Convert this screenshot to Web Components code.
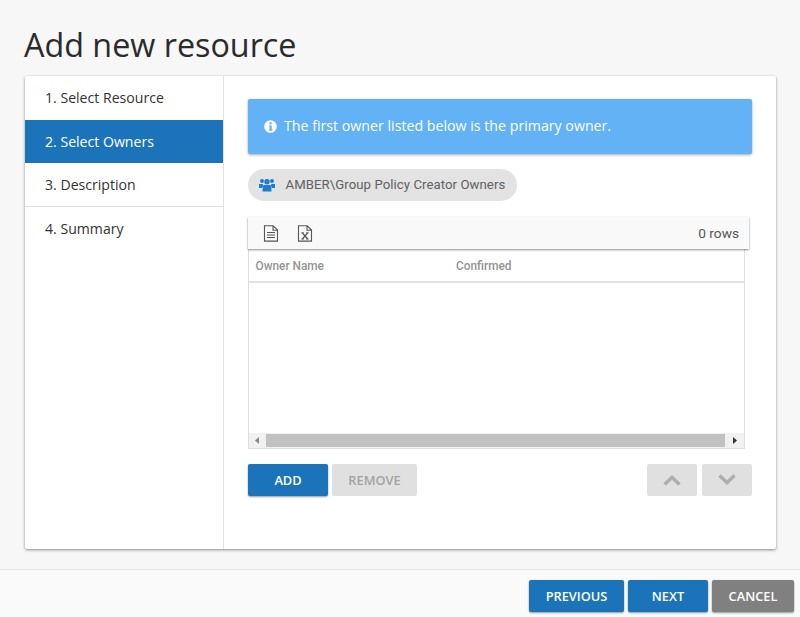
<!DOCTYPE html>
<html lang="en"><head><meta charset="utf-8"><title>Add new resource</title>
<style>
html,body{margin:0;padding:0;height:100%}
body{background:#f7f7f7;font-family:"Open Sans","Liberation Sans",sans-serif;overflow:hidden}
</style></head><body>
<wizard-dialog heading="Add new resource">
  <wizard-steps slot="nav">
    <wizard-step>1. Select Resource</wizard-step>
    <wizard-step active>2. Select Owners</wizard-step>
    <wizard-step>3. Description</wizard-step>
    <wizard-step last>4. Summary</wizard-step>
  </wizard-steps>
  <info-alert>The first owner listed below is the primary owner.</info-alert>
  <owner-chip>AMBER\Group Policy Creator Owners</owner-chip>
  <grid-toolbar rows="0 rows"></grid-toolbar>
  <owner-grid></owner-grid>
  <action-row>
    <ui-button kind="primary" w="80" slot="left">ADD</ui-button>
    <ui-button kind="disabled" w="85" slot="left">REMOVE</ui-button>
    <ui-button kind="disabled" w="50" slot="right" aria-label="Move up"><svg width="20" height="12" viewBox="0 0 20 12"><path d="M2.5 10.5 10 3.5l7.5 7" fill="none" stroke="#aeaeae" stroke-width="3.6"/></svg></ui-button>
    <ui-button kind="disabled" w="50" slot="right" aria-label="Move down"><svg width="20" height="12" viewBox="0 0 20 12"><path d="M2.5 1.5 10 8.5l7.5-7" fill="none" stroke="#aeaeae" stroke-width="3.6"/></svg></ui-button>
  </action-row>
  <ui-button slot="footer" kind="primary" w="95">PREVIOUS</ui-button>
  <ui-button slot="footer" kind="primary" w="80">NEXT</ui-button>
  <ui-button slot="footer" kind="neutral" w="82">CANCEL</ui-button>
</wizard-dialog>
<script>
function def(name, html, extra){
  customElements.define(name, class extends HTMLElement{
    constructor(){super();this.attachShadow({mode:'open'}).innerHTML=typeof html==='function'?html(this):html;}
    connectedCallback(){ if(extra) extra(this); }
  });
}
const FONT='"Open Sans","Liberation Sans",sans-serif';
def('wizard-dialog',`<style>
:host{display:flex;flex-direction:column;width:800px;height:617px;box-sizing:border-box}
h1{margin:0;padding:23px 0 0 24px;height:76px;flex:none;box-sizing:border-box;font:400 32.3px/42px ${FONT};color:#2b2b2b}
.card{margin:0 24px 0 25px;height:473px;background:#fff;display:flex;box-shadow:0 1px 3px rgba(0,0,0,.45);border-radius:2px;flex:none}
.nav{width:199px;flex:none;border-right:1px solid #e2e2e2;box-sizing:border-box}
.main{flex:1;padding:23px 24px 0;min-width:0}
.foot{margin-top:20px;flex:1;border-top:1px solid #e6e6e6;background:#fafafa;display:flex;justify-content:flex-end;align-items:flex-start;gap:4px;padding:10px 6px 0}
</style>
<h1 id="t"></h1>
<div class="card"><div class="nav"><slot name="nav"></slot></div><div class="main"><slot></slot></div></div>
<div class="foot"><slot name="footer"></slot></div>`,el=>{el.shadowRoot.getElementById('t').textContent=el.getAttribute('heading')});
def('wizard-steps',`<style>:host{display:block}</style><slot></slot>`);
def('wizard-step',`<style>
:host{display:block;height:44px;box-sizing:border-box;padding-left:20px;font:400 14.1px/43px ${FONT};color:#333;border-bottom:1px solid #e2e2e2;white-space:nowrap}
:host(:first-child){border-bottom:0}
:host([active]){background:#1b73ba;color:#fff;border-bottom:0;height:43px;line-height:43px}
:host([last]){border-bottom:0}
</style><slot></slot>`);
def('info-alert',`<style>
:host{display:flex;align-items:center;height:55px;background:#62b2f5;border-radius:2px;box-shadow:0 1px 3px rgba(0,0,0,.35);color:#fff;font:400 14.2px/20px ${FONT};padding:0 0 1px 16px;box-sizing:border-box;gap:7px;white-space:nowrap}
svg{flex:none}
</style><svg width="13" height="13" viewBox="0 0 13 13"><circle cx="6.5" cy="6.5" r="6.3" fill="#fff"/><rect x="5.5" y="2.3" width="2.2" height="2.1" fill="#62b2f5"/><path d="M4.8 5.4h2.9v4.1h.8v1.2H4.8V9.5h.8V6.6h-.8z" fill="#62b2f5"/></svg><span><slot></slot></span>`);
def('owner-chip',`<style>
:host{display:flex;align-items:center;width:269px;height:32px;margin-top:15px;background:#e3e3e3;border-radius:16px;box-sizing:border-box;padding-left:11px;gap:10.5px;font:400 13.2px/20px Roboto,sans-serif;color:#616161;letter-spacing:.06px;white-space:nowrap}
svg{flex:none}
</style><svg width="16" height="14" viewBox="0 0 16 13" fill="#1e7dcc"><circle cx="3" cy="2.4" r="2"/><circle cx="13" cy="2.4" r="2"/><circle cx="8" cy="3.2" r="2.7"/><path d="M0 5.6h3.8a3 3 0 0 0 .4 1.9A3.2 3.2 0 0 0 3 9.4H0zM16 5.6h-3.8a3 3 0 0 1-.4 1.9A3.2 3.2 0 0 1 13 9.4h3z"/><path d="M5.4 6.6h5.2A2 2 0 0 1 12.4 8.6V13H3.6V8.6a2 2 0 0 1 1.8-2z"/></svg><span><slot></slot></span>`);
def('grid-toolbar',el=>`<style>
:host{display:flex;align-items:center;justify-content:space-between;width:501px;height:32px;margin-top:16px;box-sizing:border-box;background:#f9f9f9;box-shadow:0 1px 2px rgba(0,0,0,.45);padding:0 10px 0 15px;color:#555;font:400 13.7px/20px Roboto,sans-serif;position:relative}
.i{display:flex;gap:18px}
</style><div class="i">
<svg width="16" height="17" viewBox="0 0 16 17" fill="none" stroke="#555" stroke-width="1.1"><path d="M1.5.8h8.7l4.3 4.3v11H1.5zM10 .8v4.5h4.5M4 7.5h8M4 10h8M4 12.5h8"/></svg>
<svg width="16" height="17" viewBox="0 0 16 17" fill="none" stroke="#555" stroke-width="1.1"><path d="M1.5.8h8.7l4.3 4.3v11H1.5zM10 .8v4.5h4.5"/><path d="M4.3 7.8h2.6M9.1 7.8h2.6M4.3 14h2.6M9.1 14h2.6" stroke-width=".9"/><path d="M5.4 7.8 10.6 14M10.6 7.8 5.4 14" stroke-width="1.3"/></svg>
</div><span>${el.getAttribute('rows')}</span>`);
def('owner-grid',`<style>
:host{display:flex;flex-direction:column;width:497px;height:200px;box-sizing:border-box;border:1px solid #dedede;border-top:0;background:#fff}
.h{display:flex;height:34px;flex:none;box-sizing:border-box;border-bottom:2px solid #e3e3e3;font:500 11.85px/34px Roboto,sans-serif;color:#949494}
.h div:first-child{width:207px;padding-left:6.5px;box-sizing:border-box}
.b{flex:1}
.s{height:15px;flex:none;background:#f1f1f1;display:flex;align-items:center;justify-content:space-between;padding:0 7px 0 6px}
.t{flex:1;height:13px;background:#c1c1c1;margin:0 8px 0 7px}
</style><div class="h"><div>Owner Name</div><div>Confirmed</div></div><div class="b"></div>
<div class="s"><svg width="4" height="7" viewBox="0 0 4 7"><path d="M4 0v7L0 3.5z" fill="#888"/></svg><div class="t"></div><svg width="4" height="7" viewBox="0 0 4 7"><path d="M0 0v7l4-3.5z" fill="#333"/></svg></div>`);
def('action-row',`<style>
:host{display:flex;justify-content:space-between;margin-top:15px}
div{display:flex;gap:4px}.r{gap:5px}
</style><div><slot name="left"></slot></div><div class="r"><slot name="right"></slot></div>`);
def('ui-button',`<style>
:host{display:flex;align-items:center;justify-content:center;height:32px;box-sizing:border-box;border-radius:2px;font:600 12.8px/20px ${FONT};white-space:nowrap;flex:none}
:host([kind=primary]){background:#1b73ba;color:#fff;box-shadow:0 1px 2px rgba(0,0,0,.4)}
:host([kind=neutral]){background:#808080;color:#fff;box-shadow:0 1px 2px rgba(0,0,0,.4)}
:host([kind=disabled]){background:#e0e0e0;color:#a3a3a3}
</style><slot></slot>`,el=>{el.style.width=el.getAttribute('w')+'px'});
</script>
</body></html>
